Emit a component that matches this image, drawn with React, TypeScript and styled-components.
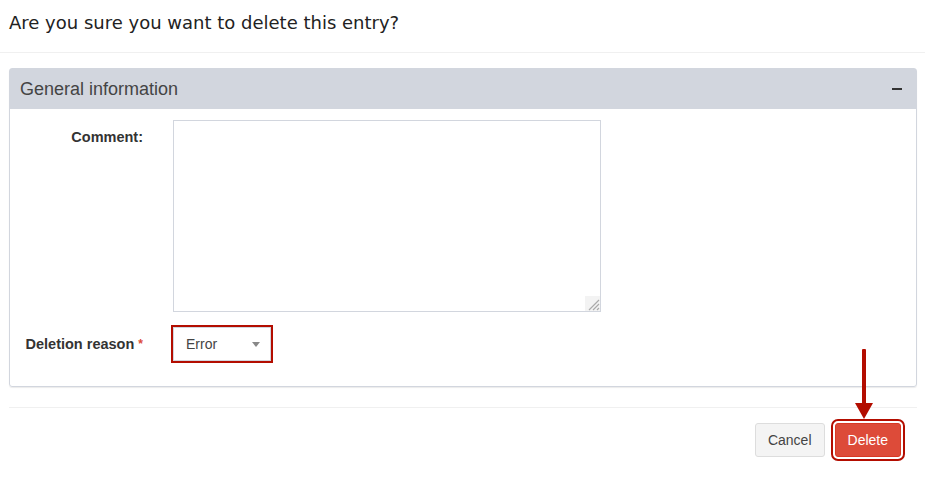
import React from 'react'
import styled, { createGlobalStyle } from 'styled-components'

const GlobalStyle = createGlobalStyle`
  body {
    margin: 0;
    background: #fff;
    font-family: "Liberation Sans", Arial, sans-serif;
    font-size: 14px;
    color: #333;
  }
`;

const Modal = styled.div`
  width: 925px;
  height: 479px;
  background: #fff;
`;

const ModalHeader = styled.div`
  height: 53px;
  box-sizing: border-box;
  padding: 0 9px;
  display: flex;
  align-items: center;
  border-bottom: 1px solid #f0f0f0;
`;

const Title = styled.h4`
  margin: 0;
  font-family: "DejaVu Sans", sans-serif;
  font-size: 18px;
  font-weight: 400;
  color: #222;
  padding-bottom: 7px;
`;

const ModalBody = styled.div`
  padding: 15px 8px 0 9px;
`;

const Panel = styled.section`
  border: 1px solid #d2d6de;
  border-radius: 3px;
  margin-bottom: 20px;
  box-shadow: 0 1px 1px rgba(0, 0, 0, 0.08);
`;

const PanelHeader = styled.div`
  height: 40px;
  background: #d2d6de;
  display: flex;
  align-items: center;
  justify-content: space-between;
  padding: 0 14px 0 10px;
`;

const PanelTitle = styled.h3`
  margin: 0;
  font-size: 18px;
  font-weight: 400;
  color: #444;
`;

const Minus = styled.span`
  width: 10px;
  height: 2px;
  background: #333;
`;

const PanelBody = styled.div`
  padding: 11px 15px 10px 15px;
`;

const FormRow = styled.div`
  display: grid;
  grid-template-columns: 118px 1fr;
  column-gap: 30px;
  margin-bottom: 15px;
`;

const Label = styled.label`
  font-weight: 700;
  font-size: 14.5px;
  text-align: right;
  padding-top: 7px;
  line-height: 20px;
  color: #333;
  white-space: nowrap;
`;

const Required = styled.span`
  color: #dd4b39;
  font-size: 12px;
  vertical-align: top;
`;

const AreaWrap = styled.div`
  position: relative;
  width: 428px;
`;

const TextArea = styled.textarea`
  width: 428px;
  height: 192px;
  box-sizing: border-box;
  border: 1px solid #d2d6de;
  border-radius: 0;
  resize: none;
  font: inherit;
  display: block;
  margin: 0;
`;

const Grip = styled.svg`
  position: absolute;
  right: 1px;
  bottom: 1px;
`;

const Select = styled.div<{ $marked?: boolean }>`
  width: 98px;
  height: 34px;
  box-sizing: border-box;
  padding: 0 10px 0 12px;
  display: flex;
  align-items: center;
  justify-content: space-between;
  color: #444;
  outline: ${p => (p.$marked ? '2px solid #b30d00' : 'none')};
  border: 1px solid #d2d6de;
`;

const Caret = styled.span`
  width: 0;
  height: 0;
  border-left: 4px solid transparent;
  border-right: 4px solid transparent;
  border-top: 5px solid #888;
`;

const Footer = styled.div`
  margin: 0 8px 0 9px;
  border-top: 1px solid #f0f0f0;
  padding: 15px 16px 15px 0;
  display: flex;
  justify-content: flex-end;
  gap: 10px;
`;

const Button = styled.button<{ $variant: 'default' | 'danger'; $marked?: boolean }>`
  height: 34px;
  padding: 0 12px;
  font: inherit;
  font-size: 14px;
  border-radius: 3px;
  border: 1px solid ${p => (p.$variant === 'danger' ? '#d73925' : '#ddd')};
  background: ${p => (p.$variant === 'danger' ? '#dd4b39' : '#f4f4f4')};
  color: ${p => (p.$variant === 'danger' ? '#fff' : '#444')};
  outline: ${p => (p.$marked ? '2px solid #b30d00' : 'none')};
  outline-offset: 2px;
`;

const Marked = styled.div`
  position: relative;
`;

const Arrow = styled.svg`
  position: absolute;
  left: 20px;
  bottom: 38px;
`;

export default function App() {
  return (
    <Modal>
      <GlobalStyle />
      <ModalHeader>
        <Title>Are you sure you want to delete this entry?</Title>
      </ModalHeader>
      <ModalBody>
        <Panel>
          <PanelHeader>
            <PanelTitle>General information</PanelTitle>
            <Minus />
          </PanelHeader>
          <PanelBody>
            <FormRow>
              <Label>Comment:</Label>
              <AreaWrap>
                <TextArea />
                <Grip width="15" height="15" viewBox="0 0 15 15">
                  <rect width="15" height="15" fill="#f3f3f3" />
                  <path d="M4 14 L14 4 M8 14 L14 8 M12 14 L14 12" stroke="#aaa" strokeWidth="1.2" />
                </Grip>
              </AreaWrap>
            </FormRow>
            <FormRow>
              <Label>
                Deletion reason <Required>*</Required>
              </Label>
              <div>
                <Select $marked>
                  Error
                  <Caret />
                </Select>
              </div>
            </FormRow>
          </PanelBody>
        </Panel>
      </ModalBody>
      <Footer>
        <Button $variant="default">Cancel</Button>
        <Marked>
          <Button $variant="danger" $marked>
            Delete
          </Button>
          <Arrow width="18" height="70" viewBox="0 0 18 70">
            <rect x="7" y="0" width="4" height="56" rx="1" fill="#b30d00" />
            <polygon points="0,54 18,54 9,70" fill="#b30d00" />
          </Arrow>
        </Marked>
      </Footer>
    </Modal>
  )
}
